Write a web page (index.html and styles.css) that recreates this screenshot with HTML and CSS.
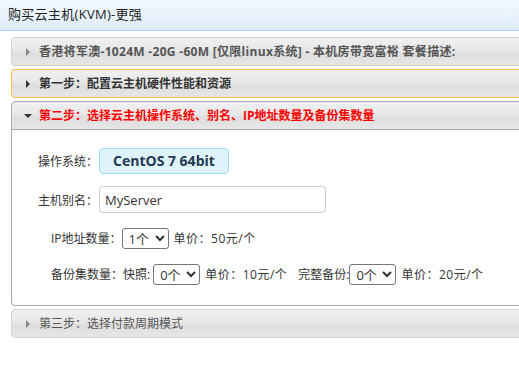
FILE: index.html
```html
<!DOCTYPE html>
<html lang="zh-CN">
<head>
    <meta charset="UTF-8">
    <title>购买云主机(KVM)-更强</title>
    <link rel="stylesheet" href="styles.css">
</head>
<body>
    <div class="titlebar">购买云主机(KVM)-更强</div>
    <div class="accordion">
        <div class="acc-head">
            <span class="tri"></span>
            <span class="head-text bold wide">香港将军澳-1024M -20G -60M [仅限linux系统] - 本机房带宽富裕 套餐描述:</span>
        </div>
        <div class="acc-head focus">
            <span class="tri dark"></span>
            <span class="head-text bold dark-text">第一步：配置云主机硬件性能和资源</span>
        </div>
        <div class="acc-head active">
            <span class="tri down"></span>
            <span class="head-text bold red">第二步：选择云主机操作系统、别名、IP地址数量及备份集数量</span>
        </div>
        <div class="acc-content">
            <div class="row row-os">
                <span class="label">操作系统：</span>
                <span class="os-badge">CentOS 7 64bit</span>
            </div>
            <div class="row row-name">
                <span class="label">主机别名：</span>
                <input class="name-input" type="text" value="MyServer">
            </div>
            <div class="row row-ip indent">
                <span class="label">IP地址数量：</span>
                <select class="num-select"><option>1个</option></select>
                <span class="price">单价：50元/个</span>
            </div>
            <div class="row row-backup indent">
                <span class="label gap">备份集数量：快照:</span>
                <select class="num-select"><option>0个</option></select>
                <span class="price">单价：10元/个</span>
                <span class="label sub">完整备份:</span>
                <select class="num-select"><option>0个</option></select>
                <span class="price">单价：20元/个</span>
            </div>
        </div>
        <div class="acc-head">
            <span class="tri"></span>
            <span class="head-text">第三步：选择付款周期模式</span>
        </div>
    </div>
</body>
</html>
```

FILE: styles.css
```css
* {
    box-sizing: border-box;
}
html, body {
    overflow: hidden;
}
body {
    margin: 0;
    padding: 0;
    background: #fff;
    color: #333;
    font-family: 'Open Sans', 'Noto Sans CJK SC', sans-serif;
    font-size: 12px;
}
.titlebar {
    height: 31px;
    padding-left: 8px;
    line-height: 29px;
    font-size: 13px;
    letter-spacing: 0.3px;
    color: #222;
    background: linear-gradient(to bottom, #f3f8fd, #ddecf9);
    border-bottom: 1px solid #a9d0ec;
}
.accordion {
    margin: 6px 0 0 11px;
    width: 640px;
}
.acc-head {
    display: flex;
    align-items: center;
    height: 29px;
    margin-top: 3px;
    padding-left: 10px;
    border: 1px solid #d3d3d3;
    border-radius: 4px;
    background: linear-gradient(to bottom, #f0f0f0 0%, #e8e8e8 45%, #dedede 55%, #e6e6e6 100%);
    color: #555;
    white-space: nowrap;
}
.acc-head:first-child {
    margin-top: 0;
}
.acc-head.focus {
    border-color: #fbbf45;
}
.acc-head.active {
    border-color: #aaa;
    border-radius: 4px 4px 0 0;
}
.tri {
    width: 12px;
    height: 8px;
    margin-right: 5px;
    display: flex;
    justify-content: center;
    align-items: center;
}
.tri::before {
    content: '';
    border-left: 4px solid #888;
    border-top: 4px solid transparent;
    border-bottom: 4px solid transparent;
}
.tri.dark::before {
    border-left-color: #333;
}
.tri.down::before {
    border-left: 4px solid transparent;
    border-right: 4px solid transparent;
    border-top: 4px solid #333;
    border-bottom: 0;
}
.head-text {
    line-height: 17px;
}
.wide {
    letter-spacing: 0.3px;
}
.bold {
    font-weight: bold;
}
.dark-text {
    color: #333;
}
.red {
    color: #f00;
}
.acc-content {
    height: 176px;
    padding: 18px 26px 0;
    border: 1px solid #aaa;
    border-top: 0;
    border-radius: 0 0 4px 4px;
    background: #fff;
}
.row {
    display: flex;
    align-items: center;
    white-space: nowrap;
}
.indent {
    padding-left: 13px;
}
.row-os {
    height: 26px;
}
.row-name {
    height: 27px;
    margin-top: 12px;
}
.row-ip {
    height: 22px;
    margin-top: 14px;
}
.row-backup {
    height: 22px;
    margin-top: 14px;
}
.label {
    color: #333;
}
.label.gap {
    margin-right: 3px;
}
.label.sub {
    margin-left: 11px;
}
.os-badge {
    height: 26px;
    margin-left: 1px;
    padding: 0 13px;
    line-height: 24px;
    font-size: 14px;
    font-weight: bold;
    color: #233b52;
    background: #def3fc;
    border: 1px solid #a3daf4;
    border-radius: 4px;
}
.name-input {
    width: 227px;
    height: 27px;
    margin: 0 0 0 1px;
    padding: 0 5px;
    font-family: 'Open Sans', 'Noto Sans CJK SC', sans-serif;
    font-size: 13px;
    color: #333;
    border: 1px solid #ccc;
    border-radius: 4px;
    outline: none;
}
.num-select {
    width: 47px;
    height: 21px;
    margin: 0;
    padding: 0 0 0 2px;
    font-family: 'Open Sans', 'Noto Sans CJK SC', sans-serif;
    font-size: 13px;
    color: #333;
    background: #fff;
    border: 1px solid #767676;
    border-radius: 3px;
}
.price {
    margin-left: 5px;
    letter-spacing: 0.5px;
}
```
